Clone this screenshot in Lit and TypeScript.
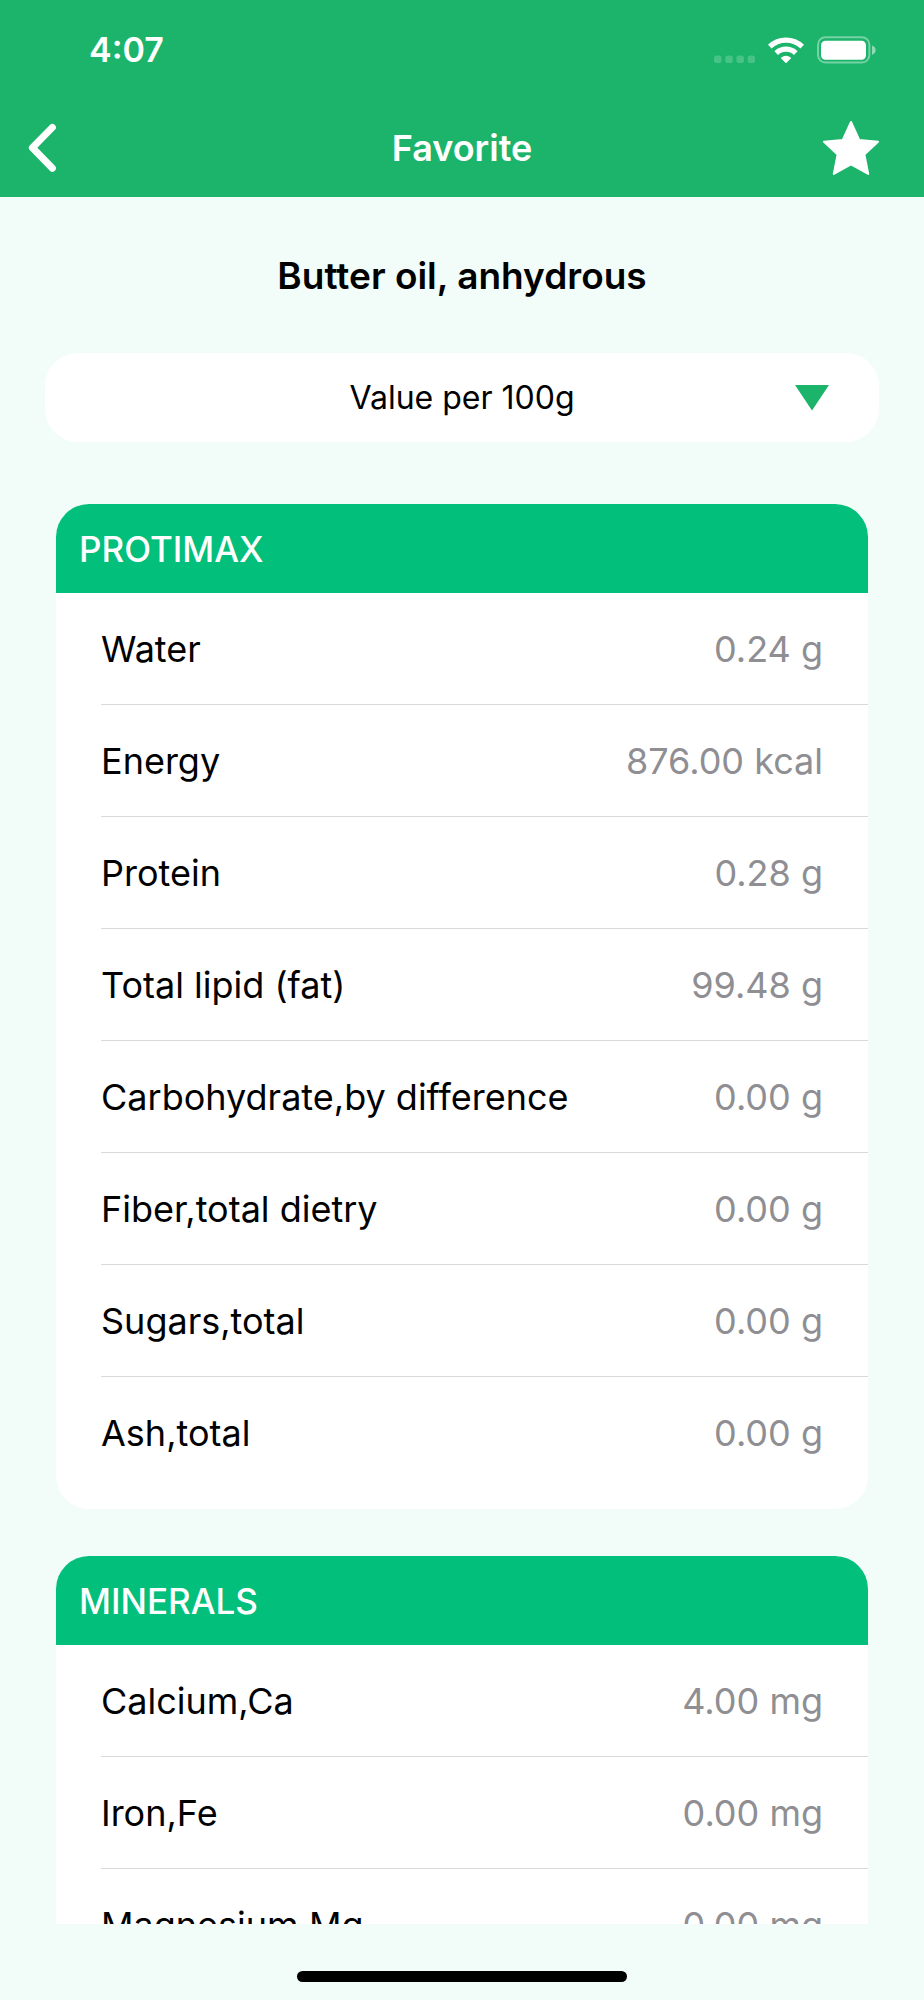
import { LitElement, html, css, svg } from "lit";
import { customElement, property, state } from "lit/decorators.js";

interface Nutrient {
  name: string;
  value: string;
}

const PROTIMAX: Nutrient[] = [
  { name: "Water", value: "0.24 g" },
  { name: "Energy", value: "876.00 kcal" },
  { name: "Protein", value: "0.28 g" },
  { name: "Total lipid (fat)", value: "99.48 g" },
  { name: "Carbohydrate,by difference", value: "0.00 g" },
  { name: "Fiber,total dietry", value: "0.00 g" },
  { name: "Sugars,total", value: "0.00 g" },
  { name: "Ash,total", value: "0.00 g" },
];

const MINERALS: Nutrient[] = [
  { name: "Calcium,Ca", value: "4.00 mg" },
  { name: "Iron,Fe", value: "0.00 mg" },
  { name: "Magnesium,Mg", value: "0.00 mg" },
];

@customElement("status-bar")
class StatusBar extends LitElement {
  static styles = css`
    :host {
      display: flex;
      justify-content: space-between;
      align-items: center;
      height: 100px;
      padding: 0 48px 0 89px;
      color: #fff;
    }
    .time {
      font-size: 34px;
      line-height: 44px;
      font-weight: 600;
    }
    .icons {
      display: flex;
      align-items: center;
      gap: 13px;
    }
    svg {
      display: block;
    }
  `;

  render() {
    return html`
      <span class="time">4:07</span>
      <div class="icons">
        <svg width="41" height="28" viewBox="0 0 41 28" fill="#fff" fill-opacity="0.2" aria-hidden="true">
          ${[0, 11.2, 22.4, 33.6].map(
            (x) => svg`<rect x=${x} y="19.5" width="7.6" height="7.6" rx="2.8" />`
          )}
        </svg>
        <svg width="36" height="28" viewBox="0 0 36 28" aria-label="Wi-Fi" role="img">
          <g fill="none" stroke="#fff" stroke-width="5.2">
            <path d="M1.8 10.6 A23.4 23.4 0 0 1 34.2 10.6" />
            <path d="M8.2 17.1 A14.2 14.2 0 0 1 27.8 17.1" />
          </g>
          <path
            d="M13.2 21.6 A7.6 7.6 0 0 1 22.8 21.6 Q23.3 22 22.8 22.5 L18.6 26.8 Q18 27.3 17.4 26.8 L13.2 22.5 Q12.7 22 13.2 21.6 Z"
            fill="#fff"
          />
        </svg>
        <svg width="59" height="28" viewBox="0 0 59 28" aria-label="Battery" role="img">
          <rect x="1" y="1.2" width="51.4" height="25.4" rx="7.5" fill="none" stroke="#fff" stroke-opacity="0.4" stroke-width="2" />
          <rect x="4" y="4.8" width="45" height="19" rx="4.5" fill="#fff" />
          <path d="M55 9.6 Q58.6 11 58.6 14.2 Q58.6 17.4 55 18.8 Z" fill="#fff" fill-opacity="0.5" />
        </svg>
      </div>
    `;
  }
}

@customElement("nutrient-card")
class NutrientCard extends LitElement {
  @property() heading = "";
  @property({ attribute: false }) items: Nutrient[] = [];

  static styles = css`
    :host {
      display: block;
      background: #fff;
      border-radius: 33px;
      overflow: hidden;
      flex: none;
      padding-bottom: 20px;
    }
    .heading {
      margin: 0;
      padding: 23px 23px 22px;
      background: #02bf7c;
      color: #fff;
      font-size: 35px;
      line-height: 44px;
      font-weight: 500;
    }
    .body {
      padding-left: 45px;
    }
    .table {
      width: 100%;
      border-collapse: separate;
      border-spacing: 0;
    }
    .name,
    .value {
      padding: 34px 0 33px;
      border-bottom: 1px solid #d9d9d9;
      font-size: 36px;
      line-height: 44px;
      font-weight: 400;
    }
    .name {
      text-align: left;
      color: #000;
    }
    .value {
      text-align: right;
      padding-right: 45px;
      color: #8e8e93;
      white-space: nowrap;
    }
    .row:last-child > * {
      border-bottom-color: transparent;
    }
  `;

  render() {
    return html`
      <h2 class="heading" id="heading">${this.heading}</h2>
      <div class="body">
        <table class="table" aria-labelledby="heading">
          <tbody>
            ${this.items.map(
              (n) => html`
                <tr class="row">
                  <th class="name" scope="row">${n.name}</th>
                  <td class="value">${n.value}</td>
                </tr>
              `
            )}
          </tbody>
        </table>
      </div>
    `;
  }
}

@customElement("app-root")
class AppRoot extends LitElement {
  @state() private favorite = true;

  static styles = css`
    :host {
      display: flex;
      flex-direction: column;
      height: 100vh;
      background: #f2fcf9;
      font-family: Inter, "Liberation Sans", sans-serif;
      color: #000;
    }
    .top {
      background: #1bb46a;
      color: #fff;
      flex: none;
    }
    .nav {
      display: grid;
      grid-template-columns: 1fr auto 1fr;
      align-items: center;
      height: 95px;
      padding: 0 25px 2px;
    }
    .nav-title {
      margin: 0;
      font-size: 36px;
      line-height: 44px;
      font-weight: 600;
    }
    .icon-button {
      appearance: none;
      border: 0;
      background: none;
      padding: 0;
      color: inherit;
      cursor: pointer;
      display: block;
    }
    .icon-button svg {
      display: block;
    }
    .icon-button.star {
      justify-self: end;
      padding-right: 16px;
    }
    .food {
      margin: 0;
      padding: 57px 45px 55px;
      text-align: center;
      font-size: 37px;
      line-height: 44px;
      font-weight: 600;
      flex: none;
    }
    .picker {
      position: relative;
      margin: 0 45px;
      flex: none;
    }
    .select {
      appearance: none;
      display: block;
      width: 100%;
      height: 89px;
      padding: 0 80px;
      border: 0;
      border-radius: 33px;
      background: #fff;
      color: #000;
      font-family: inherit;
      font-size: 32px;
      line-height: 44px;
      text-align: center;
      text-align-last: center;
    }
    .arrow {
      position: absolute;
      right: 50px;
      top: 32px;
      pointer-events: none;
    }
    .list {
      flex: 1;
      min-height: 0;
      overflow-y: auto;
      scrollbar-width: none;
      display: flex;
      flex-direction: column;
      gap: 47px;
      margin-top: 62px;
      padding: 0 56px;
    }
    .home {
      flex: none;
      display: flex;
      justify-content: center;
      align-items: flex-end;
      height: 58px;
      padding-bottom: 18px;
    }
    .indicator {
      width: 330px;
      height: 11px;
      border-radius: 6px;
      background: #000;
    }
  `;

  private toggleFavorite() {
    this.favorite = !this.favorite;
  }

  render() {
    return html`
      <header class="top">
        <status-bar></status-bar>
        <nav class="nav">
          <button class="icon-button" aria-label="Back">
            <svg width="34" height="54" viewBox="0 0 34 54" fill="none" stroke="currentColor" stroke-width="7" stroke-linecap="round" stroke-linejoin="round">
              <path d="M27.4 6.4 L7.4 26.8 L27.4 47.2" />
            </svg>
          </button>
          <h1 class="nav-title">Favorite</h1>
          <button
            class="icon-button star"
            aria-label="Favorite"
            aria-pressed=${this.favorite ? "true" : "false"}
            @click=${this.toggleFavorite}
          >
            <svg width="64" height="60" viewBox="0 0 64 60" stroke="currentColor" stroke-width="2" stroke-linejoin="round" fill=${this.favorite ? "currentColor" : "none"}>
              <path d="M32 4 L40.2 22 L59 23.8 L45.4 36.4 L49.2 56 L32 46.4 L14.8 56 L18.6 36.4 L5 23.8 L23.8 22 Z" />
            </svg>
          </button>
        </nav>
      </header>
      <h2 class="food">Butter oil, anhydrous</h2>
      <div class="picker">
        <select class="select" aria-label="Serving size">
          <option>Value per 100g</option>
        </select>
        <svg class="arrow" width="34" height="26" viewBox="0 0 34 26" aria-hidden="true">
          <path d="M0 0 H34 L17 25.4 Z" fill="#1bb46a" />
        </svg>
      </div>
      <main class="list">
        <nutrient-card heading="PROTIMAX" .items=${PROTIMAX}></nutrient-card>
        <nutrient-card heading="MINERALS" .items=${MINERALS}></nutrient-card>
      </main>
      <footer class="home"><div class="indicator"></div></footer>
    `;
  }
}
